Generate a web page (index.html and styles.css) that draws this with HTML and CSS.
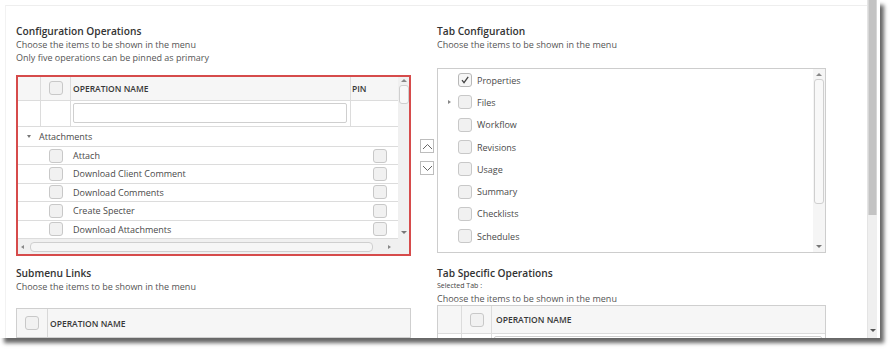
FILE: index.html
```html
<!DOCTYPE html>
<html>
<head>
<meta charset="utf-8">
<link rel="stylesheet" href="styles.css">
</head>
<body>
<div class="panel">
  <div class="content">
    <div class="frame">
      <div class="grid">
        <section class="block">
          <h2 class="title">Configuration Operations</h2>
          <p class="sub">Choose the items to be shown in the menu</p>
          <p class="sub">Only five operations can be pinned as primary</p>
          <div class="optable">
            <div class="op-main">
              <div class="op-row op-head">
                <div class="c1"></div>
                <div class="c2"><span class="cb"></span></div>
                <div class="c3 hd">OPERATION NAME</div>
                <div class="c4 hd">PIN</div>
              </div>
              <div class="op-row op-filter">
                <div class="c1"></div>
                <div class="c2"></div>
                <div class="c3"><span class="filter-input"></span></div>
                <div class="c4"></div>
              </div>
              <div class="op-group"><span class="tri-down"></span>Attachments</div>
              <div class="op-item"><span class="slot"><span class="cb"></span></span><span class="name">Attach</span><span class="pin"><span class="cb"></span></span></div>
              <div class="op-item"><span class="slot"><span class="cb"></span></span><span class="name">Download Client Comment</span><span class="pin"><span class="cb"></span></span></div>
              <div class="op-item"><span class="slot"><span class="cb"></span></span><span class="name">Download Comments</span><span class="pin"><span class="cb"></span></span></div>
              <div class="op-item"><span class="slot"><span class="cb"></span></span><span class="name">Create Specter</span><span class="pin"><span class="cb"></span></span></div>
              <div class="op-item"><span class="slot"><span class="cb"></span></span><span class="name">Download Attachments</span><span class="pin"><span class="cb"></span></span></div>
              <div class="hscroll">
                <span class="arr-left"></span>
                <span class="hthumb"></span>
                <span class="arr-right"></span>
              </div>
            </div>
            <div class="vscroll">
              <span class="arr-up"></span>
              <span class="vthumb"></span>
              <span class="vspace"></span>
              <span class="arr-down"></span>
              <span class="corner"></span>
            </div>
          </div>
        </section>

        <div class="movers">
          <button class="mv" aria-label="Move up"><svg width="11" height="7" viewBox="0 0 11 7"><path d="M1 6 L5.5 1.5 L10 6" fill="none" stroke="#666" stroke-width="1"/></svg></button>
          <button class="mv" aria-label="Move down"><svg width="11" height="7" viewBox="0 0 11 7"><path d="M1 1 L5.5 5.5 L10 1" fill="none" stroke="#666" stroke-width="1"/></svg></button>
        </div>

        <section class="block">
          <h2 class="title">Tab Configuration</h2>
          <p class="sub">Choose the items to be shown in the menu</p>
          <div class="tablist">
            <ul class="tabs">
              <li><span class="exp"></span><span class="cb checked"><svg width="10" height="10" viewBox="0 0 10 10"><path d="M2 5.2 L4 7.6 L8.2 1.8" fill="none" stroke="#444" stroke-width="1.3"/></svg></span><span>Properties</span></li>
              <li><span class="exp"><span class="tri-right"></span></span><span class="cb"></span><span>Files</span></li>
              <li><span class="exp"></span><span class="cb"></span><span>Workflow</span></li>
              <li><span class="exp"></span><span class="cb"></span><span>Revisions</span></li>
              <li><span class="exp"></span><span class="cb"></span><span>Usage</span></li>
              <li><span class="exp"></span><span class="cb"></span><span>Summary</span></li>
              <li><span class="exp"></span><span class="cb"></span><span>Checklists</span></li>
              <li><span class="exp"></span><span class="cb"></span><span>Schedules</span></li>
              <li><span class="exp"></span><span class="cb"></span><span></span></li>
            </ul>
            <div class="vscroll tl-scroll">
              <span class="arr-up"></span>
              <span class="vthumb tl-thumb"></span>
              <span class="vspace"></span>
              <span class="arr-down"></span>
            </div>
          </div>
        </section>

        <section class="block">
          <h2 class="title">Submenu Links</h2>
          <p class="sub">Choose the items to be shown in the menu</p>
          <div class="subtable">
            <div class="sub-head">
              <div class="sc1"><span class="cb"></span></div>
              <div class="sc2 hd">OPERATION NAME</div>
            </div>
          </div>
        </section>

        <div></div>

        <section class="block">
          <h2 class="title">Tab Specific Operations</h2>
          <p class="tiny">Selected Tab :</p>
          <p class="sub">Choose the items to be shown in the menu</p>
          <div class="tstable">
            <div class="ts-row ts-head">
              <div class="t1"></div>
              <div class="t2"><span class="cb"></span></div>
              <div class="t3 hd">OPERATION NAME</div>
            </div>
            <div class="ts-row ts-filter">
              <div class="t1"></div>
              <div class="t2"></div>
              <div class="t3"><span class="filter-input"></span></div>
            </div>
          </div>
        </section>
      </div>
    </div>
  </div>
  <div class="page-scroll">
    <span class="ps-thumb"></span>
    <span class="ps-space"></span>
    <span class="arr-down dark"></span>
  </div>
</div>
</body>
</html>
```

FILE: styles.css
```css
* { box-sizing: border-box; }
html, body { margin: 0; padding: 0; background: #fff; }
body {
  font-family: "Open Sans", "Liberation Sans", sans-serif;
  color: #4a4a4a;
  width: 895px;
  height: 355px;
  overflow: hidden;
}
.panel {
  width: 880px;
  height: 338px;
  background: #fff;
  display: flex;
  overflow: hidden;
  box-shadow: 4px 5px 4px rgba(0, 0, 0, 0.6);
}
.content {
  width: 867px;
  padding: 5px 0 0 5px;
}
.frame {
  height: 100%;
  border-top: 1px solid #eeeeee;
  border-left: 1px solid #f2f2f2;
  padding: 18px 0 0 10px;
}
.grid {
  display: grid;
  grid-template-columns: 395px 26px 389px;
  grid-template-rows: 232px auto;
  row-gap: 10px;
}
.block { min-width: 0; }
.title {
  margin: 0;
  font-size: 10.2px;
  font-weight: 600;
  line-height: 14px;
  color: #333;
}
.sub {
  margin: 0;
  font-size: 9px;
  line-height: 13px;
  color: #555;
}
.tiny {
  margin: 0;
  font-size: 7px;
  line-height: 12px;
  color: #444;
}
.hd {
  font-size: 8.5px;
  font-weight: 600;
  color: #383838;
}
.cb {
  display: inline-flex;
  align-items: center;
  justify-content: center;
  width: 14px;
  height: 14px;
  border: 1px solid #c8c8c8;
  border-radius: 3px;
  background: #f1f1f1;
  flex: none;
}
.cb.checked { background: #f6f6f6; border-color: #b8b8b8; }

/* Configuration operations table */
.optable {
  margin-top: 11px;
  height: 181px;
  border: 2px solid #d64b4b;
  display: flex;
}
.op-main {
  flex: 1;
  display: flex;
  flex-direction: column;
  min-width: 0;
}
.op-row { display: flex; border-bottom: 1px solid #dcdcdc; }
.op-row > div { border-right: 1px solid #dcdcdc; display: flex; align-items: center; }
.op-row > div:last-child { border-right: 0; }
.c1 { width: 23px; }
.c2 { width: 30px; justify-content: center; }
.c3 { width: 280px; padding-left: 2px; }
.c4 { flex: 1; padding-left: 1px; }
.op-head { height: 24px; background: #f6f6f6; }
.op-filter { height: 26px; }
.op-filter .c3 { align-items: flex-start; padding: 2px 3px 0 2px; }
.filter-input {
  display: block;
  width: 100%;
  height: 20px;
  border: 1px solid #cfcfcf;
  border-radius: 2px;
  background: #fff;
}
.op-group {
  height: 20px;
  border-bottom: 1px solid #dcdcdc;
  display: flex;
  align-items: center;
  font-size: 9px;
  color: #4a4a4a;
  padding-left: 9px;
}
.tri-down {
  width: 0; height: 0;
  border-left: 2.5px solid transparent;
  border-right: 2.5px solid transparent;
  border-top: 3px solid #777;
  margin-right: 8px;
}
.op-item {
  height: 18.5px;
  border-bottom: 1px solid #dcdcdc;
  display: flex;
  align-items: center;
  font-size: 9px;
  color: #4a4a4a;
}
.op-item .slot { width: 53px; padding-left: 23px; display: flex; justify-content: center; }
.op-item .name { width: 280px; padding-left: 2px; }
.op-item .pin { padding-left: 22px; display: flex; }
.hscroll {
  margin-top: auto;
  height: 15px;
  background: #f0f0f0;
  display: flex;
  align-items: center;
  padding: 0 4px 0 3px;
}
.hthumb {
  margin-left: 6px;
  width: 343px;
  height: 10px;
  border: 1px solid #cfcfcf;
  border-radius: 4px;
  background: #f6f6f6;
}
.arr-left {
  width: 0; height: 0;
  border-top: 2.5px solid transparent;
  border-bottom: 2.5px solid transparent;
  border-right: 3px solid #888;
}
.arr-right {
  margin-left: auto;
  margin-right: 3px;
  width: 0; height: 0;
  border-top: 2.5px solid transparent;
  border-bottom: 2.5px solid transparent;
  border-left: 3px solid #888;
}
.vscroll {
  width: 11px;
  background: #f0f0f0;
  display: flex;
  flex-direction: column;
  align-items: center;
  padding-top: 2px;
}
.arr-up {
  width: 0; height: 0;
  border-left: 3px solid transparent;
  border-right: 3px solid transparent;
  border-bottom: 3px solid #888;
  margin-bottom: 3px;
}
.arr-down {
  width: 0; height: 0;
  border-left: 3px solid transparent;
  border-right: 3px solid transparent;
  border-top: 3px solid #777;
}
.vthumb {
  width: 10px;
  height: 19px;
  border: 1px solid #cfcfcf;
  border-radius: 3px;
  background: #f8f8f8;
}
.vspace { flex: 1; }
.corner { height: 20px; width: 100%; }

/* movers */
.movers {
  padding: 115px 0 0 9px;
  display: flex;
  flex-direction: column;
  gap: 8px;
}
.mv {
  width: 14px;
  height: 14px;
  padding: 0;
  border: 1px solid #bdbdbd;
  background: #fff;
  display: flex;
  align-items: center;
  justify-content: center;
}

/* Tab configuration list */
.tablist {
  margin-top: 17px;
  height: 185px;
  border: 1px solid #cdcdcd;
  display: flex;
  overflow: hidden;
}
.tabs {
  list-style: none;
  margin: 0;
  padding: 0;
  flex: 1;
  overflow: hidden;
}
.tabs li {
  height: 22.3px;
  display: flex;
  align-items: center;
  font-size: 9px;
  color: #4a4a4a;
}
.tabs .exp {
  width: 20px;
  display: flex;
  justify-content: flex-start;
  padding-left: 10px;
}
.tabs .cb { margin-right: 5px; }
.tri-right {
  width: 0; height: 0;
  border-top: 2.5px solid transparent;
  border-bottom: 2.5px solid transparent;
  border-left: 3px solid #888;
}
.tl-scroll { width: 12px; background: #f5f5f5; padding-top: 4px; padding-bottom: 4px; }
.tl-thumb { height: 125px; width: 10px; border-radius: 3px; }

/* Submenu links table */
.subtable {
  margin-top: 15px;
  border: 1px solid #cfcfcf;
}
.sub-head {
  height: 28px;
  background: #f6f6f6;
  display: flex;
}
.sc1 {
  width: 31px;
  border-right: 1px solid #d8d8d8;
  display: flex;
  align-items: center;
  justify-content: center;
}
.sc2 { display: flex; align-items: center; padding-left: 2px; }

/* Tab specific operations */
.tstable { border: 1px solid #cfcfcf; }
.ts-row { display: flex; border-bottom: 1px solid #dcdcdc; }
.ts-row > div { border-right: 1px solid #dcdcdc; display: flex; align-items: center; }
.ts-row > div:last-child { border-right: 0; }
.ts-head { height: 28px; background: #f6f6f6; }
.ts-filter { height: 26px; }
.t1 { width: 24px; }
.t2 { width: 30px; justify-content: center; }
.t3 { flex: 1; padding-left: 4px; }
.ts-filter .t3 { align-items: flex-start; padding: 2px 3px 0 2px; }

/* page scrollbar */
.page-scroll {
  width: 10px;
  margin-right: 3px;
  background: #efefef;
  border-left: 1px solid #e4e4e4;
  display: flex;
  flex-direction: column;
  align-items: center;
  padding-bottom: 6px;
}
.ps-thumb {
  width: 100%;
  height: 215px;
  background: #c3c3c3;
  border-left: 1px solid #d6d6d6;
  border-right: 1px solid #d6d6d6;
  flex: none;
}
.ps-space { flex: 1; }
.arr-down.dark { border-top-color: #555; }
```
